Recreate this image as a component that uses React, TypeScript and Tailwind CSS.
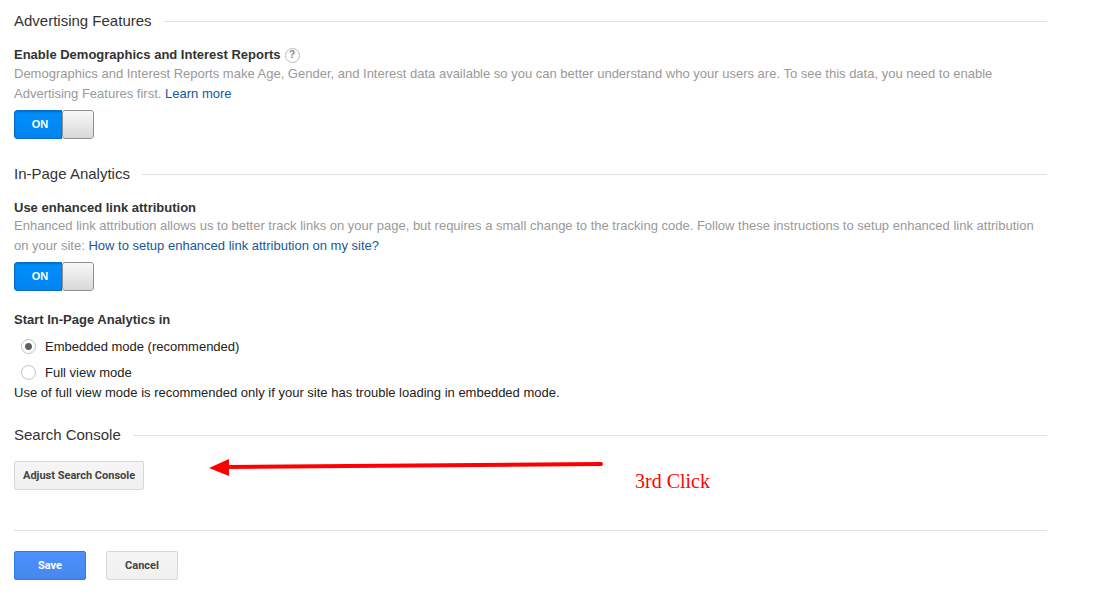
import { useState } from "react";
import type { ReactNode } from "react";

const SectionHeading = ({ children }: { children: ReactNode }) => (
  <div className="flex items-center gap-3">
    <h2 className="text-[15px] leading-5 text-[#333]">{children}</h2>
    <div className="h-px flex-1 bg-[#e1e1e1]" />
  </div>
);

const Toggle = ({ label }: { label: string }) => {
  const [on, setOn] = useState(true);

  return (
    <label
      className={`relative mt-1.5 flex h-[29px] w-20 cursor-pointer overflow-hidden rounded-[3px] ${
        on ? "" : "flex-row-reverse"
      }`}
    >
      <input
        type="checkbox"
        className="sr-only"
        aria-label={label}
        checked={on}
        onChange={() => setOn(!on)}
      />
      <span
        className={`flex flex-1 items-center justify-center border text-[11px] leading-4 font-bold ${
          on
            ? "rounded-l-[3px] border-r-0 border-[#0a6fcb] bg-linear-to-b from-[#0090ff] to-[#0084ee] pr-px pb-px pl-1 text-white shadow-[inset_0_1px_2px_rgba(0,0,0,0.25)]"
            : "rounded-r-[3px] border-l-0 border-[#999] bg-[#eee] text-[#666]"
        }`}
      >
        {on ? "ON" : "OFF"}
      </span>
      <span className="w-8 rounded-[3px] border border-[#8f8f8f] bg-linear-to-b from-[#f8f8f8] to-[#d8d8d8]" />
    </label>
  );
};

const modes = [
  { id: "embedded", label: "Embedded mode (recommended)" },
  { id: "full", label: "Full view mode" },
];

const App = () => {
  const [mode, setMode] = useState("embedded");

  return (
    <div className="min-h-screen bg-white pt-[11px] pr-[55px] pb-9 pl-3.5 font-['Liberation_Sans',Arial,sans-serif] text-[13px] leading-5 text-[#222]">
      {/* Advertising Features */}
      <section>
        <SectionHeading>Advertising Features</SectionHeading>
        <div className="mt-3.5 flex h-[19px] items-center gap-1">
          <h3 className="font-bold text-[#333]">Enable Demographics and Interest Reports</h3>
          <button
            aria-label="Help"
            className="mt-px flex size-[15px] items-center justify-center rounded-full border border-[#bbb] text-[10px] leading-none font-bold text-[#888]"
          >
            ?
          </button>
        </div>
        <p className="text-[#999]">
          Demographics and Interest Reports make Age, Gender, and Interest data available so you can
          better understand who your users are. To see this data, you need to enable Advertising
          Features first.{" "}
          <a href="#" className="text-[#15589a]">
            Learn more
          </a>
        </p>
        <Toggle label="Enable Demographics and Interest Reports" />
      </section>

      {/* In-Page Analytics */}
      <section className="mt-[25px]">
        <SectionHeading>In-Page Analytics</SectionHeading>
        <h3 className="mt-4 leading-4 font-bold text-[#333]">Use enhanced link attribution</h3>
        <p className="text-[#999]">
          Enhanced link attribution allows us to better track links on your page, but requires a
          small change to the tracking code. Follow these instructions to setup enhanced link
          attribution on your site:{" "}
          <a href="#" className="text-[#15589a]">
            How to setup enhanced link attribution on my site?
          </a>
        </p>
        <Toggle label="Use enhanced link attribution" />

        <fieldset className="mt-5">
          <legend className="leading-[18px] font-bold text-[#333]">Start In-Page Analytics in</legend>
          <div className="mt-2 flex flex-col items-start gap-1.5">
            {modes.map((m) => (
              <label key={m.id} className="flex gap-[9px] pl-[7px]">
                <input
                  type="radio"
                  name="mode"
                  value={m.id}
                  checked={mode === m.id}
                  onChange={() => setMode(m.id)}
                  className="mt-0.5 size-[15px] appearance-none rounded-full border border-[#c0c0c0] bg-white checked:bg-[radial-gradient(circle,#5f5f5f_3px,#fff_4px)]"
                />
                {m.label}
              </label>
            ))}
          </div>
        </fieldset>
        <p>
          Use of full view mode is recommended only if your site has trouble loading in embedded
          mode.
        </p>
      </section>

      {/* Search Console */}
      <section className="relative mt-[22px]">
        <SectionHeading>Search Console</SectionHeading>
        <button className="mt-4 h-[29px] rounded-xs border border-[#d8d8d8] bg-linear-to-b from-[#f5f5f5] to-[#f0f0f0] px-2 font-[Roboto,sans-serif] text-[11px] font-bold text-[#444]">
          Adjust Search Console
        </button>

        {/* Hand-drawn note pointing at the button */}
        <div className="pointer-events-none absolute top-8 left-[195px] flex gap-8 text-[#f00]">
          <svg width="394" height="24" viewBox="0 0 394 24">
            <path d="M18 10L392 7" stroke="currentColor" strokeWidth="4" strokeLinecap="round" />
            <path d="M0 11L20 2V19Z" fill="currentColor" />
          </svg>
          <span className="mt-3 font-['Liberation_Serif',serif] text-[20px] leading-6">3rd Click</span>
        </div>
      </section>

      <div className="mt-10 flex gap-5 border-t border-[#e1e1e1] pt-5 font-[Roboto,sans-serif] text-[11px] font-bold">
        <button className="h-[29px] w-[72px] rounded-xs border border-[#3079ed] bg-linear-to-b from-[#4d90fe] to-[#4787ed] text-white">
          Save
        </button>
        <button className="h-[29px] w-[72px] rounded-xs border border-[#d8d8d8] bg-linear-to-b from-[#f5f5f5] to-[#f0f0f0] text-[#444]">
          Cancel
        </button>
      </div>
    </div>
  );
};

export default App;
